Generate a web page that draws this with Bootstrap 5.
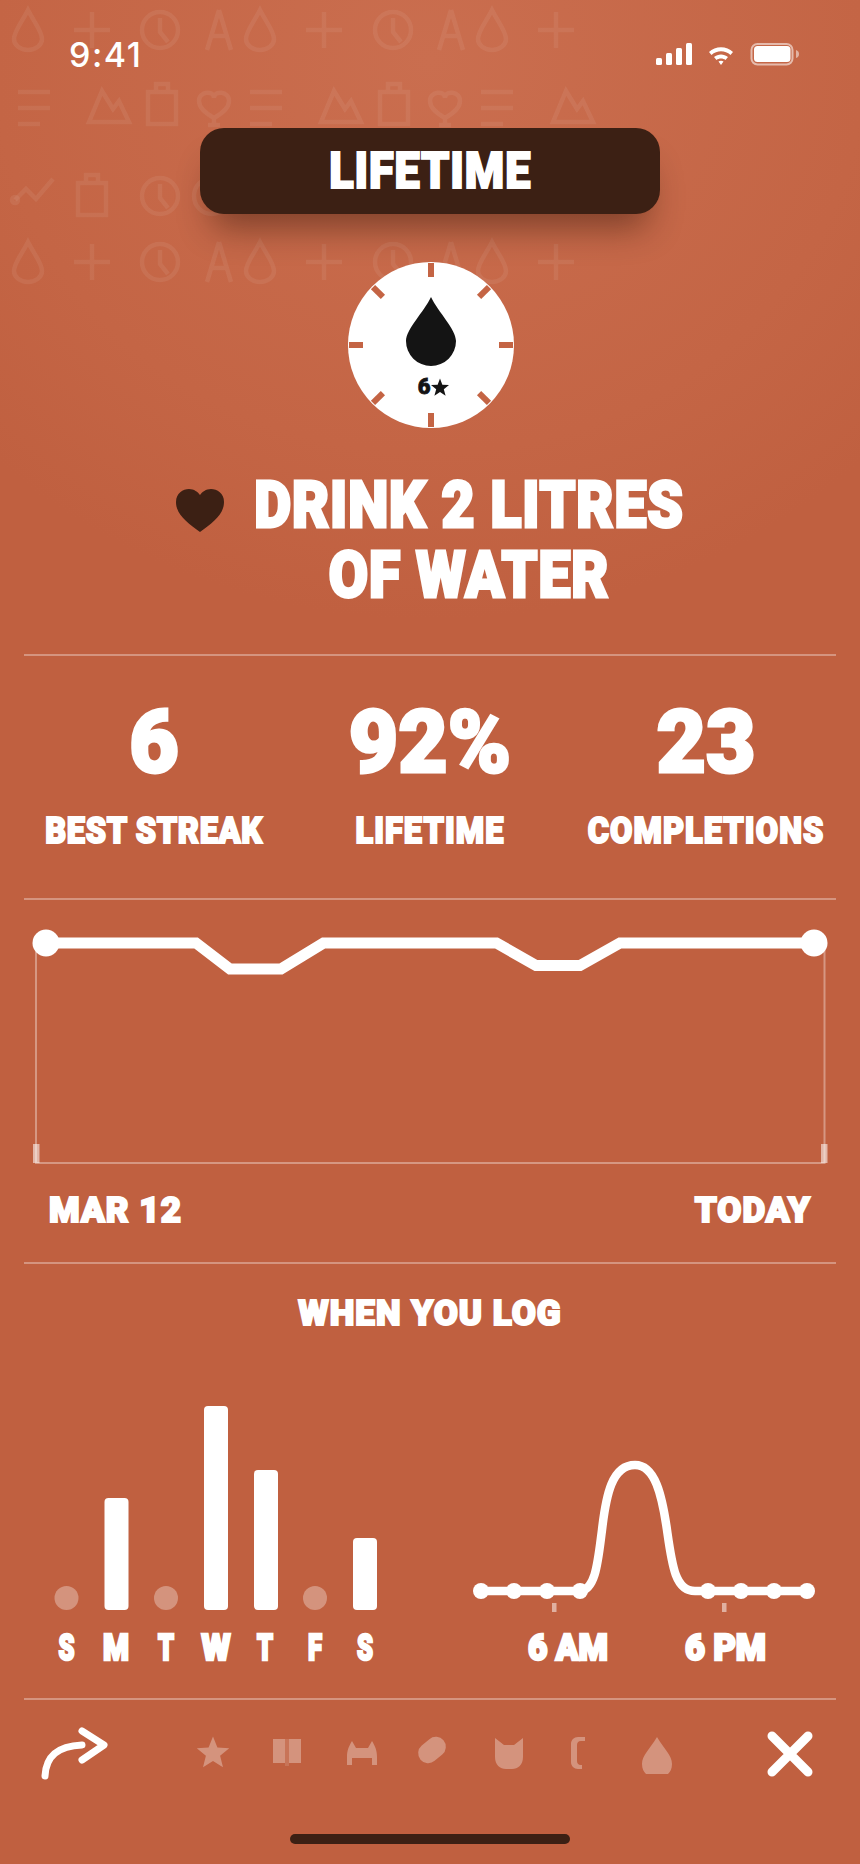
<!DOCTYPE html>
<html lang="en">
<head>
<meta charset="UTF-8">
<title>Drink 2 Litres of Water</title>
<link href="https://cdn.jsdelivr.net/npm/bootstrap@5.3.0/dist/css/bootstrap.min.css" rel="stylesheet">
<style>
    html, body { margin: 0; background: #c06040; }
    .phone {
        position: relative; width: 860px; height: 1864px; overflow: hidden; color: #fff;
        background: radial-gradient(ellipse 620px 560px at 430px 60px, #ca6e4f 0%, #c46545 70%, #c06040 100%), #c06040;
        font-family: Roboto, "Liberation Sans", sans-serif;
    }
    .bg-pattern { position: absolute; left: 0; top: 0; }
    .content { position: relative; }
    .heavy { font-family: Roboto, "Liberation Sans", sans-serif; font-weight: 900; -webkit-text-stroke-width: 2px; }
    .status-row { height: 128px; padding: 38px 61px 0 69px; }
    .status-icons { margin-top: 5px; }
    .clock-text { font-family: Inter, "Liberation Sans", sans-serif; font-size: 34px; font-weight: 500; line-height: 34px; letter-spacing: 1.5px; }
    .period-pill {
        width: 460px; height: 86px; background: #3c2014; border-radius: 24px; font-size: 50px; line-height: 1;
        box-shadow: 0 26px 34px -12px rgba(40,15,5,.45);
    }
    .pill-text { display: inline-block; transform: scaleX(.9); letter-spacing: 1px; }
    .dial { margin-top: 48px; padding-left: 2px; }
    .title-row { margin-top: 43px; height: 183px; padding-left: 176px; }
    .title-text { font-size: 64px; line-height: 70px; width: 520px; text-align: center; margin-left: -15px; transform: scaleX(.89); letter-spacing: 1px; -webkit-text-stroke-width: 3px; }
    .heart-slot { width: 48px; padding-top: 18px; flex-shrink: 0; }
    .divider-box { margin: 0 24px; border-top: 2px solid rgba(255,255,255,.33); }
    .stats-box { height: 244px; padding-top: 48px; }
    .stat-row { margin: 0 -8px; }
    .stat-num { font-size: 88px; line-height: 76px; transform: scaleX(.97); -webkit-text-stroke-width: 3px; }
    .stat-label { font-size: 36px; line-height: 40px; margin-top: 31px; white-space: nowrap; transform: scaleX(.9); letter-spacing: 1.2px; }
    .stat-tight { letter-spacing: .8px; }
    .stat-cell { width: 276px; }
    .chart-box { height: 364px; }
    .chart-ends { padding: 0 25px; font-size: 35px; line-height: 40px; margin-top: 7px; letter-spacing: 1px; }
    .log-box { height: 436px; }
    .log-title { font-size: 35px; line-height: 40px; height: 73px; padding-top: 30px; letter-spacing: 1px; }
    .chart-svg { display: block; margin-left: -24px; }
    .action-row { height: 165px; }
    .home-bar { position: absolute; left: 290px; top: 1834px; width: 280px; height: 10px; border-radius: 5px; background: #3c2014; }
    .muted-icon { fill: rgba(255,255,255,.32); }
</style>
</head>
<body>
<div class="phone">
    <svg class="bg-pattern" width="860" height="300" fill="none" stroke="#fff" stroke-opacity=".065" stroke-width="4.500">
        <defs>
            <g id="p-drop"><path d="M0-20C-6-8-14 1-14 9A14 11 0 0 0 14 9C14 1 6-8 0-20Z"/></g>
            <g id="p-plus"><path d="M0-18V18M-18 0H18"/></g>
            <g id="p-clock"><circle r="18"/><path d="M0-12V2L8 12"/></g>
            <g id="p-comp"><path d="M0-20L-12 20M0-20L12 20M-7 6H7"/></g>
            <g id="p-lines"><path d="M-16-16H16M-16 0H16M-16 16H6"/></g>
            <g id="p-mount"><path d="M-19 15L-6-16L5 2L11-6L21 15Z"/></g>
            <g id="p-batt"><path d="M-14-12H14V20H-14ZM-6-12V-20H6V-12"/></g>
            <g id="p-heart"><path d="M0 10C-9 5-15-1-15-7C-15-17 0-18 0-10C0-18 15-17 15-7C15-1 9 5 0 10ZM0 10V17M-6 17H6"/></g>
            <g id="p-trend"><circle cx="-18" cy="9" r="3"/><path d="M-18 9L-7-2L3 8L20-12"/></g>
        </defs>
        <use href="#p-drop" x="28" y="30"/><use href="#p-plus" x="92" y="30"/><use href="#p-clock" x="160" y="30"/><use href="#p-comp" x="219" y="30"/><use href="#p-drop" x="260" y="30"/><use href="#p-plus" x="324" y="30"/><use href="#p-clock" x="393" y="30"/><use href="#p-comp" x="451" y="30"/><use href="#p-drop" x="492" y="30"/><use href="#p-plus" x="556" y="30"/>
        <use href="#p-lines" x="34" y="108"/><use href="#p-mount" x="108" y="107"/><use href="#p-batt" x="162" y="104"/><use href="#p-heart" x="214" y="108"/><use href="#p-lines" x="266" y="108"/><use href="#p-mount" x="340" y="107"/><use href="#p-batt" x="394" y="104"/><use href="#p-heart" x="445" y="108"/><use href="#p-lines" x="497" y="108"/><use href="#p-mount" x="572" y="107"/>
        <use href="#p-trend" x="33" y="191"/><use href="#p-batt" x="92" y="195"/><use href="#p-clock" x="160" y="196"/><use href="#p-clock" x="212" y="196"/>
        <use href="#p-drop" x="28" y="262"/><use href="#p-plus" x="92" y="262"/><use href="#p-clock" x="160" y="262"/><use href="#p-comp" x="219" y="262"/><use href="#p-drop" x="260" y="262"/><use href="#p-plus" x="324" y="262"/><use href="#p-clock" x="393" y="262"/><use href="#p-comp" x="451" y="262"/><use href="#p-drop" x="492" y="262"/><use href="#p-plus" x="556" y="262"/>
    </svg>

    <div class="content">
        <div class="status-row d-flex justify-content-between align-items-start">
            <div class="clock-text">9:41</div>
            <svg class="status-icons" width="144" height="24" fill="#fff">
                <rect x="1" y="15" width="6" height="7" rx="1.500"/><rect x="11" y="10" width="6" height="12" rx="1.500"/><rect x="21" y="5" width="6" height="17" rx="1.500"/><rect x="31" y="0" width="6" height="22" rx="1.500"/>
                <path d="M54 9C60 2.500 72 2.500 78 9L75.500 12C70 7 62 7 56.500 12ZM59 14C63 10.500 69 10.500 73 14L70.500 17C68 15 64 15 61.500 17ZM63.500 18.500C65 17.500 67 17.500 68.500 18.500L66 22Z"/>
                <rect x="96.500" y="1" width="41" height="20.500" rx="6" fill="none" stroke="#fff" stroke-opacity=".55" stroke-width="2"/>
                <rect x="99" y="3" width="36.500" height="16" rx="3.500"/>
                <path d="M141 7V15Q144 14 144 11Q144 8 141 7Z" fill-opacity=".5"/>
            </svg>
        </div>

        <div class="d-flex justify-content-center">
            <div class="period-pill heavy d-flex align-items-center justify-content-center"><span class="pill-text">LIFETIME</span></div>
        </div>

        <div class="dial d-flex justify-content-center">
            <svg width="166" height="166" viewBox="-83 -83 166 166">
                <circle r="83" fill="#fff"/>
                <g fill="#c46444">
                    <rect x="-3" y="-82" width="6" height="14"/><rect x="-3" y="68" width="6" height="14"/>
                    <rect x="-82" y="-3" width="14" height="6"/><rect x="68" y="-3" width="14" height="6"/>
                    <rect x="-3" y="-82" width="6" height="14" transform="rotate(45)"/><rect x="-3" y="-82" width="6" height="14" transform="rotate(135)"/>
                    <rect x="-3" y="-82" width="6" height="14" transform="rotate(225)"/><rect x="-3" y="-82" width="6" height="14" transform="rotate(315)"/>
                </g>
                <path d="M0-48C-7-33-25-16-25-4A25 25 0 0 0 25-4C25-16 7-33 0-48Z" fill="#141414"/>
                <text x="-7" y="49" text-anchor="middle" font-family="Roboto" font-weight="900" font-size="22" fill="#141414" stroke="#141414" stroke-width=".8">6</text>
                <path d="M9 33.500L11.350 39.800L18 40.100L12.800 44.200L14.600 50.700L9 47L3.400 50.700L5.200 44.200L0 40.100L6.650 39.800Z" fill="#141414"/>
            </svg>
        </div>

        <div class="title-row d-flex">
            <div class="heart-slot">
                <svg width="48" height="43" viewBox="0 0 48 43"><path d="M24 43C12 34 0 26 0 13C0 4 7 0 13 0C18 0 22 3 24 6C26 3 30 0 35 0C41 0 48 4 48 13C48 26 36 34 24 43Z" fill="#3c2014"/></svg>
            </div>
            <div class="title-text heavy">DRINK 2 LITRES<br>OF WATER</div>
        </div>

        <div class="divider-box stats-box">
            <div class="stat-row d-flex justify-content-between text-center">
                <div class="stat-cell"><div class="stat-num heavy">6</div><div class="stat-label heavy stat-tight">BEST STREAK</div></div>
                <div class="stat-cell"><div class="stat-num heavy">92%</div><div class="stat-label heavy">LIFETIME</div></div>
                <div class="stat-cell"><div class="stat-num heavy">23</div><div class="stat-label heavy">COMPLETIONS</div></div>
            </div>
        </div>

        <div class="divider-box chart-box">
            <svg class="chart-svg" width="860" height="284" viewBox="0 900 860 284" fill="none">
                <path d="M36 950V1163H824.500V950" stroke="#fff" stroke-opacity=".35" stroke-width="2"/>
                <rect x="33" y="1144" width="6.500" height="19" fill="#fff" fill-opacity=".55"/>
                <rect x="821" y="1144" width="6.500" height="19" fill="#fff" fill-opacity=".55"/>
                <path d="M46 943H196L230 969H281L323.500 943H496.500L536 965.500H580L620 943H814" stroke="#fff" stroke-width="11"/>
                <circle cx="46" cy="943" r="13.500" fill="#fff"/><circle cx="814" cy="943" r="13.500" fill="#fff"/>
            </svg>
            <div class="chart-ends heavy d-flex justify-content-between"><span>MAR 12</span><span>TODAY</span></div>
        </div>

        <div class="divider-box log-box">
            <div class="log-title heavy text-center">WHEN YOU LOG</div>
            <svg class="chart-svg" width="860" height="361" viewBox="0 1337 860 361" fill="none">
                <g fill="#fff">
                    <circle cx="66.500" cy="1598" r="12" fill-opacity=".32"/><circle cx="166" cy="1598" r="12" fill-opacity=".32"/><circle cx="315" cy="1598" r="12" fill-opacity=".32"/>
                    <rect x="104.500" y="1498" width="24" height="112" rx="4"/><rect x="204" y="1406" width="24" height="204" rx="4"/>
                    <rect x="254" y="1470" width="24" height="140" rx="4"/><rect x="353" y="1538" width="24" height="72" rx="4"/>
                </g>
                <g fill="#fff" stroke="#fff" stroke-width="2.500" font-family="Roboto" font-weight="900" font-size="36" text-anchor="middle">
                    <text x="66.500" y="1660" textLength="16" lengthAdjust="spacingAndGlyphs">S</text><text x="116" y="1660" textLength="26" lengthAdjust="spacingAndGlyphs">M</text><text x="166" y="1660" textLength="16" lengthAdjust="spacingAndGlyphs">T</text><text x="216" y="1660" textLength="29" lengthAdjust="spacingAndGlyphs">W</text><text x="265" y="1660" textLength="16" lengthAdjust="spacingAndGlyphs">T</text><text x="315" y="1660" textLength="14" lengthAdjust="spacingAndGlyphs">F</text><text x="365" y="1660" textLength="16" lengthAdjust="spacingAndGlyphs">S</text>
                    <text x="568" y="1660" textLength="80" lengthAdjust="spacingAndGlyphs">6 AM</text><text x="725.500" y="1660" textLength="81" lengthAdjust="spacingAndGlyphs">6 PM</text>
                </g>
                <path d="M481 1591H580C596 1590 598 1560 602 1530C606 1495 612 1465 635 1465C655 1465 662 1495 667 1530C672 1565 675 1591 695 1591H807" stroke="#fff" stroke-width="8.500"/>
                <g fill="#fff">
                    <circle cx="481" cy="1591" r="8"/><circle cx="514" cy="1591" r="8"/><circle cx="547" cy="1591" r="8"/><circle cx="580" cy="1591" r="8"/>
                    <circle cx="708" cy="1591" r="8"/><circle cx="741" cy="1591" r="8"/><circle cx="774" cy="1591" r="8"/><circle cx="807" cy="1591" r="8"/>
                    <rect x="552" y="1603" width="4.500" height="9" fill-opacity=".5"/><rect x="722" y="1603" width="4.500" height="9" fill-opacity=".5"/>
                </g>
            </svg>
        </div>

        <div class="divider-box action-row">
            <svg class="chart-svg" width="860" height="100" viewBox="0 1700 860 100" fill="none">
                <path d="M45 1776C46 1756 58 1746 82 1745M82 1731L104 1745L82 1760" stroke="#fff" stroke-width="7" stroke-linecap="round" stroke-linejoin="round"/>
                <g class="muted-icon">
                    <path d="M213 1736.500L217.400 1747.400L229.200 1748.200L220.100 1755.800L223 1767.300L213 1761L203 1767.300L205.900 1755.800L196.800 1748.200L208.600 1747.400Z"/>
                    <path d="M273 1739H285V1763H273ZM289 1739H301V1763H289Z"/>
                    <rect x="285" y="1739" width="4" height="27" fill-opacity=".4"/>
                    <path d="M347 1757C347 1750 349 1746 352 1741L356 1748H368L372 1741C375 1746 377 1750 377 1757V1765H372V1758H352V1765H347Z"/>
                    <rect x="417" y="1740" width="30" height="20" rx="10" transform="rotate(-40 432 1750)"/>
                    <path d="M495 1738L504 1745H514L523 1738V1757C523 1765 518 1769 512 1769H506C500 1769 495 1765 495 1757Z"/>
                    <path d="M585 1737V1741H581C578 1741 577 1743 577 1745V1761C577 1763 578 1765 581 1765H582V1769H578C574 1769 571 1766 571 1762V1744C571 1740 574 1737 578 1737Z"/>
                    <path d="M657 1737C650 1749 642 1755 642 1764C642 1769 644 1772 646 1774H668C670 1772 672 1769 672 1764C672 1755 664 1749 657 1737Z"/>
                </g>
                <path d="M772 1736L808 1772M808 1736L772 1772" stroke="#fff" stroke-width="9" stroke-linecap="round"/>
            </svg>
        </div>
    </div>
    <div class="home-bar"></div>
</div>
<script src="https://cdn.jsdelivr.net/npm/bootstrap@5.3.0/dist/js/bootstrap.bundle.min.js"></script>
</body>
</html>
